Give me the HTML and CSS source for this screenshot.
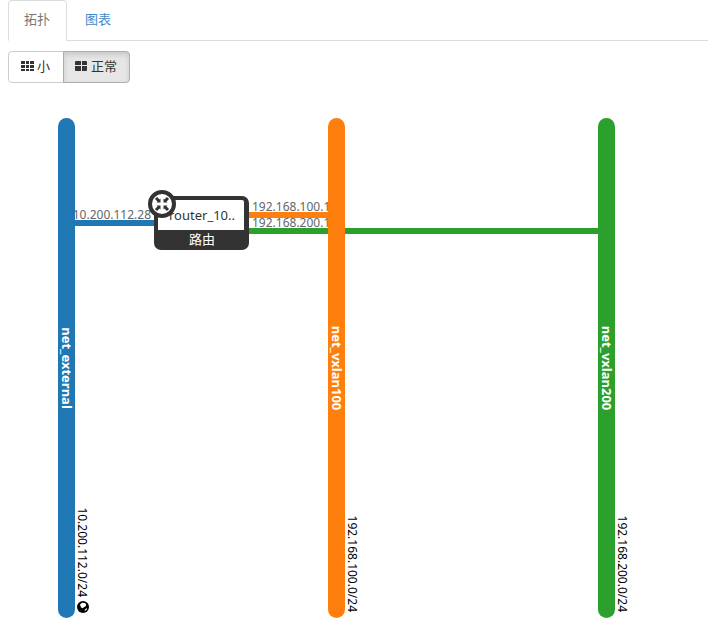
FILE: index.html
```html
<!DOCTYPE html>
<html lang="zh-CN">
<head>
<meta charset="utf-8">
<title>网络拓扑</title>
<link rel="stylesheet" href="styles.css">
</head>
<body>
<nav class="tabs">
  <a class="tab tab-active" href="#topology">拓扑</a>
  <a class="tab" href="#graph">图表</a>
</nav>
<main>
  <div class="toggle">
    <button class="btn" type="button">
      <svg class="icon" viewBox="0 0 14 12" aria-hidden="true"><path d="M0 1h4v3H0zM5 1h3v3H5zM9 1h4v3H9zM0 5h4v3H0zM5 5h3v3H5zM9 5h4v3H9zM0 9h4v2H0zM5 9h3v2H5zM9 9h4v2H9z"/></svg>
      <span>小</span>
    </button>
    <button class="btn btn-active" type="button">
      <svg class="icon" viewBox="0 0 14 12" aria-hidden="true"><path d="M1 1H6V5H0V2Q0 1 1 1zM7 1h4q1 0 1 1V5H7zM0 6h6v5H1Q0 11 0 10zM7 6h5v4q0 1-1 1H7z"/></svg>
      <span>正常</span>
    </button>
  </div>
  <svg class="topology" height="520" role="img" aria-label="网络拓扑">
    <g class="blue">
      <rect x="50" y="15" width="17" height="500" rx="8.500"/>
      <rect x="66" y="117" width="84" height="6"/>
    </g>
    <rect class="orange" x="238" y="109" width="84" height="6"/>
    <rect class="green" x="238" y="125" width="354" height="6"/>
    <text class="address" x="143" y="116" text-anchor="end">10.200.112.28</text>
    <text class="address" x="244" y="108">192.168.100.1</text>
    <text class="address" x="244" y="124">192.168.200.1</text>
    <rect class="orange" x="320" y="15" width="17" height="500" rx="8.500"/>
    <rect class="green" x="590" y="15" width="17" height="500" rx="8.500"/>

    <text class="network" transform="translate(54 265) rotate(90)">net_external</text>
    <text class="network" transform="translate(324 265) rotate(90)">net_vxlan100</text>
    <text class="network" transform="translate(594 265) rotate(90)">net_vxlan200</text>
    <text class="cidr" transform="translate(70 494) rotate(90)">10.200.112.0/24</text>
    <text class="cidr" transform="translate(340 509) rotate(90)">192.168.100.0/24</text>
    <text class="cidr" transform="translate(610 509) rotate(90)">192.168.200.0/24</text>
    <g transform="translate(75 504)">
      <circle r="6"/>
      <path class="land" d="M-3-2.500L-1-4.200L2-4L3.200-2.500L2.500-.5L.8.2L0 1.200L-2 .5zM1.500 3L3.800 1L4 2.200L2 4z"/>
    </g>

    <g class="router">
      <rect class="dark" x="146" y="93" width="95" height="54" rx="7"/>
      <path class="light" d="M150 127V99q0-2 2-2h82q2 0 2 2v28z"/>
      <text class="name" x="194" y="117">router_10..</text>
      <text class="kind" x="194" y="141">路由</text>
      <circle class="badge" cx="154" cy="101" r="12"/>
      <g transform="translate(154 101)">
        <path class="shaft" d="M-6-6L-3-3M6-6L3-3M-6 6L-3 3M6 6L3 3"/>
        <path class="dark" d="M-1.500-1.500h-4l4-4zM1.500-1.500v-4l4 4zM-1.500 1.500v4l-4-4zM1.500 1.500h4l-4 4z"/>
      </g>
    </g>
  </svg>
</main>
</body>
</html>
```
FILE: styles.css
```css
* {
  box-sizing: border-box;
}

body {
  margin: 0;
  padding-left: 8px;
  background: #fff;
  color: #333;
  font-family: "Noto Sans", "Noto Sans CJK SC", sans-serif;
  font-size: 13px;
  line-height: 18px;
}

.tabs {
  display: flex;
  border-bottom: 1px solid #ddd;
}

.tab {
  margin-bottom: -1px;
  padding: 9px 16px 12px 15px;
  border: 1px solid transparent;
  border-radius: 4px 4px 0 0;
  color: #428bca;
  text-decoration: none;
  margin-right: 2px;
}

.tab-active {
  border-color: #ddd #ddd #fff;
  background: #fff;
  color: #777;
}

.toggle {
  display: flex;
  margin: 10px 0 20px;
}

.btn {
  display: flex;
  align-items: center;
  gap: 2px;
  height: 32px;
  padding: 0 13px 2px 12px;
  border: 1px solid #ccc;
  border-radius: 4px 0 0 4px;
  background: #fff;
  color: #333;
  font: inherit;
}

.btn-active {
  margin-left: -1px;
  padding: 0 12px 2px 11px;
  border-color: #adadad;
  border-radius: 0 4px 4px 0;
  background: #e6e6e6;
  box-shadow: inset 0 3px 5px rgba(0, 0, 0, 0.125);
}

.icon {
  width: 14px;
  height: 12px;
  fill: #333;
}

.topology {
  display: block;
  width: 100%;
}

.blue {
  fill: #1f77b4;
}

.orange {
  fill: #ff7f0e;
}

.green {
  fill: #2ca02c;
}

.address {
  fill: #666;
  font-size: 12px;
}

.network {
  fill: #fff;
  font-size: 13px;
  font-weight: bold;
  text-anchor: middle;
}

.cidr {
  fill: #000;
  font-size: 12px;
  text-anchor: end;
}

.dark {
  fill: #333;
}

.light,
.land {
  fill: #fff;
}

.name,
.kind {
  fill: #333;
  font-size: 13px;
  text-anchor: middle;
}

.kind {
  fill: #fff;
}

.badge {
  fill: #fff;
  stroke: #333;
  stroke-width: 4px;
}

.shaft {
  stroke: #333;
  stroke-width: 3px;
}
```
